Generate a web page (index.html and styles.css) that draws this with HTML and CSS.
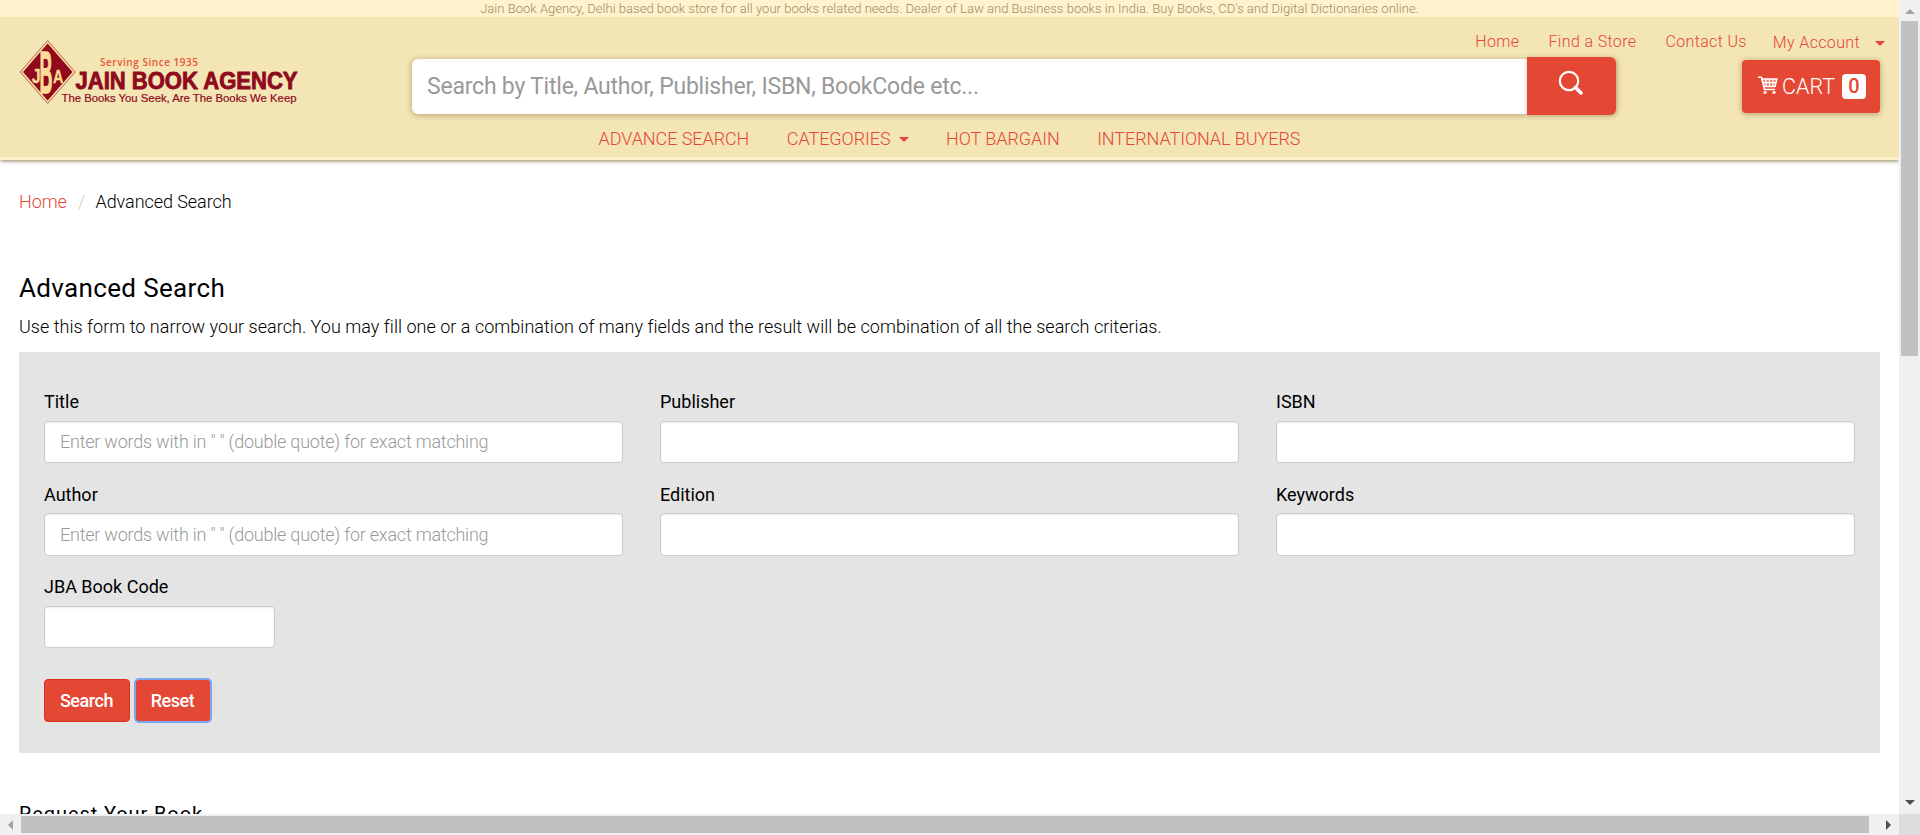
FILE: index.html
```html
<!DOCTYPE html>
<html lang="en">
<head>
<meta charset="utf-8">
<title>Advanced Search - Jain Book Agency</title>
<link rel="stylesheet" href="styles.css">
</head>
<body>
<div class="window">
  <div class="page">
    <div class="topbar">Jain Book Agency, Delhi based book store for all your books related needs. Dealer of Law and Business books in India. Buy Books, CD's and Digital Dictionaries online.</div>
    <header class="header">
      <a class="logo">
        <svg width="290" height="68" viewBox="18 38 290 68">
          <path d="M47.700 40.500 75.200 72 47.700 103.500 20.200 72Z" fill="#fcdc96" stroke="#b5606b" stroke-width="1"/>
          <path d="M47.700 43.500 72.500 72 47.700 100.500 23 72Z" fill="#8f0a1c"/>
          <g class="logo-mono">
            <text transform="translate(31.800 82.500) scale(.8 1)" font-size="20">J</text>
            <text transform="translate(53 82.500) scale(.8 1)" font-size="18">A</text>
            <text class="logo-b" transform="translate(39.600 92.500) scale(.3 1)" font-size="60">B</text>
          </g>
          <text class="logo-since" x="100" y="66" textLength="98">Serving Since 1935</text>
          <text class="logo-name" x="75.500" y="88.500" textLength="222" lengthAdjust="spacingAndGlyphs">JAIN BOOK AGENCY</text>
          <text class="logo-tag" x="61.500" y="102" textLength="235" lengthAdjust="spacingAndGlyphs">The Books You Seek, Are The Books We Keep</text>
        </svg>
      </a>
      <nav class="toplinks">
        <a>Home</a><a>Find a Store</a><a>Contact Us</a><a class="account"><span>My Account</span><i class="caret"></i></a>
      </nav>
      <div class="search">
        <div class="search-input">Search by Title, Author, Publisher, ISBN, BookCode etc...</div>
        <button class="search-btn" aria-label="Search"><svg width="26" height="26" viewBox="0 0 26 26" fill="none" stroke="#fff"><circle cx="11" cy="11" r="9.200" stroke-width="2.200"/><path d="M17.500 17.500 23 23" stroke-width="3.600" stroke-linecap="round"/></svg></button>
      </div>
      <div class="cart-cell">
        <a class="cart">
          <svg width="20" height="18" viewBox="0 0 20 18" fill="none" stroke="#fff"><path d="M0 1.200H3.600L6.500 13.500H17" stroke-width="1.600"/><path d="M4 3H19L17 10.500H6Z" fill="#fff" fill-opacity=".3" stroke-width="1.500"/><path d="M8 3V10M11.500 3V10M15 3V10M5 6.600H18" stroke-width="1.200"/><path d="M5.500 16.500H8.500M14.500 16.500H17.500" stroke-width="2.400"/></svg>
          <span>CART</span><b class="badge">0</b>
        </a>
      </div>
      <nav class="mainnav">
        <a>ADVANCE SEARCH</a><a class="cat"><span>CATEGORIES</span><i class="caret"></i></a><a>HOT BARGAIN</a><a>INTERNATIONAL BUYERS</a>
      </nav>
    </header>
    <main class="content">
      <div class="crumbs"><a>Home</a><span class="sep">/</span><span>Advanced Search</span></div>
      <h1 class="title">Advanced Search</h1>
      <p class="intro">Use this form to narrow your search. You may fill one or a combination of many fields and the result will be combination of all the search criterias.</p>
      <form class="panel">
        <div class="fields">
          <label class="field"><span>Title</span><span class="input">Enter words with in " " (double quote) for exact matching</span></label>
          <label class="field"><span>Publisher</span><span class="input"></span></label>
          <label class="field"><span>ISBN</span><span class="input"></span></label>
          <label class="field"><span>Author</span><span class="input tall">Enter words with in " " (double quote) for exact matching</span></label>
          <label class="field"><span>Edition</span><span class="input tall"></span></label>
          <label class="field"><span>Keywords</span><span class="input tall"></span></label>
          <label class="field"><span>JBA Book Code</span><span class="input short"></span></label>
        </div>
        <div class="actions"><button type="button" class="btn">Search</button><button type="button" class="btn focused">Reset</button></div>
      </form>
      <h2 class="subtitle">Request Your Book</h2>
    </main>
  </div>
  <div class="vbar"><i class="arrow up"></i><i class="vthumb"></i><i class="arrow down"></i></div>
  <div class="hbar"><i class="arrow left"></i><i class="hthumb"></i><i class="arrow right"></i></div>
  <div class="corner"></div>
</div>
</body>
</html>
```
FILE: styles.css
```css
* { box-sizing: border-box; }
body { margin: 0; font-family: Roboto, "Liberation Sans", sans-serif; font-weight: 300; font-size: 18px; line-height: 26px; color: #000; }
.window { display: grid; grid-template-columns: 1899px 21px; grid-template-rows: 814px 21px; width: 1920px; height: 835px; overflow: hidden; }
.page { overflow: hidden; background: #fff; }
.topbar { position: relative; z-index: 1; height: 17px; background: #fff2cc; color: #9d8d67; font-size: 13px; letter-spacing: .03px; line-height: 17px; text-align: center; white-space: nowrap; }
.header { display: grid; grid-template-columns: 393px 1204px 264px; grid-template-rows: 40px 58px 42px; height: 143px; padding: 0 19px; background: #f4e5b5; border-bottom: 3px solid #fff2cc; box-shadow: 0 1px 4px rgba(80, 60, 0, .65); color: #e44734; }
.logo { grid-row: 1 / 3; padding-top: 21px; margin-left: -1px; }
.logo svg { display: block; overflow: visible; }
.logo-mono { font-family: "Liberation Sans", sans-serif; font-weight: 700; fill: #fcdc96; stroke: #fcdc96; stroke-width: .3px; }
.logo-b { stroke-width: 1.500px; }
.logo-since { font: 600 10px "Open Sans", sans-serif; fill: #e8563c; }
.logo-name { font: 700 24px "Liberation Sans", sans-serif; fill: #8f0a1c; stroke: #8f0a1c; stroke-width: .9px; }
.logo-tag { font: 400 11px "Liberation Sans", sans-serif; fill: #8f0a1c; stroke: #8f0a1c; stroke-width: .2px; }
.toplinks { grid-column: 2 / 4; display: flex; justify-content: flex-end; align-items: flex-start; gap: 29px; padding-top: 12px; margin-right: -5px; font-size: 16px; letter-spacing: .36px; }
.account { display: flex; align-items: center; gap: 15px; padding-top: 1px; margin-left: -3px; }
.caret { display: inline-block; border: 5px solid transparent; border-top-color: #e44734; border-bottom: 0; }
.search { grid-column: 2; display: flex; align-items: stretch; height: 58px; }
.search-input { flex: 1; margin: 2px 0 1px; background: #fff; border-radius: 6px 0 0 6px; padding-left: 15px; font-size: 23px; letter-spacing: -.22px; font-weight: 400; line-height: 56px; color: #999; box-shadow: 0 1px 6px rgba(80, 60, 0, .4); }
.search-btn { display: flex; align-items: flex-start; width: 89px; padding: 13px 0 0 31px; border: 0; background: #e44734; border-radius: 0 6px 6px 0; box-shadow: 1px 1px 5px rgba(80, 60, 0, .4); }
.cart-cell { display: flex; justify-content: flex-end; padding-top: 3px; }
.cart { display: flex; align-items: center; width: 138px; height: 53px; padding: 0 14px 0 16px; border-radius: 4px; background: #e44734; color: #fff; font-size: 21.500px; box-shadow: 0 1px 6px rgba(80, 60, 0, .4); }
.cart span { margin: 0 auto 0 4px; }
.cart svg { margin-top: -3px; }
.badge { width: 24px; height: 25px; border-radius: 4px; background: #fff; color: #e44734; font-size: 20px; font-weight: 500; line-height: 25px; text-align: center; }
.mainnav { grid-row: 3; grid-column: 1 / 4; display: flex; justify-content: center; align-items: flex-start; gap: 37.500px; padding-top: 11px; letter-spacing: -.07px; }
.cat { display: flex; align-items: center; gap: 8px; }
.content { padding: 0 19px; }
.crumbs { padding-top: 29px; display: flex; letter-spacing: -.06px; }
.crumbs a { color: #e44734; }
.sep { margin: 0 10.500px 0 11px; color: #ccc; }
.title { margin: 58px 0 0; font-size: 26px; line-height: 30px; font-weight: 400; letter-spacing: .35px; }
.intro { margin: 11px 0 12px; letter-spacing: .025px; }
.panel { width: 1861px; height: 401px; padding: 37px 25px 0; background: #e4e4e4; }
.fields { display: grid; grid-template-columns: repeat(3, 579px); column-gap: 37px; grid-template-rows: 93px 92px 94px; }
.field { display: flex; flex-direction: column; font-weight: 400; }
.input { display: block; height: 42px; margin-top: 6px; padding-left: 15px; border: 1px solid #ccc; border-radius: 4px; background: #fff; box-shadow: inset 0 1px 2px rgba(0, 0, 0, .08); color: #999; font-weight: 300; letter-spacing: -.22px; line-height: 40px; }
.tall { height: 43px; margin-top: 5px; line-height: 41px; }
.short { width: 231px; }
.actions { display: flex; gap: 5px; margin-top: 11px; }
.btn { height: 43px; width: 86px; padding: 0 1px 0 0; border: 1px solid #d8301c; border-radius: 4px; background: #e44734; color: #fff; font: 500 18px/40px Roboto, sans-serif; letter-spacing: -.45px; }
.focused { width: 76px; border-color: #b65a70; outline: 2px solid #7aa7f0; outline-offset: -1px; }
.subtitle { margin: 48px 0 0; font-size: 20px; line-height: 26px; font-weight: 400; letter-spacing: .9px; }
.vbar, .hbar { display: flex; align-items: center; background: #f0f0f0; }
.vbar { flex-direction: column; }
.vthumb { width: 17px; height: 335px; margin-top: 7px; background: #c1c1c1; }
.hthumb { height: 17px; width: 1848px; margin-left: 8px; background: #c1c1c1; }
.arrow { border: 5px solid transparent; }
.up { margin-top: 9px; border-top: 0; border-bottom-color: #a3a3a3; }
.down { margin-top: auto; margin-bottom: 9px; border-bottom: 0; border-top-color: #505050; }
.left { margin-left: 8px; border-left: 0; border-right-color: #a3a3a3; }
.right { margin-left: auto; margin-right: 8px; border-right: 0; border-left-color: #505050; }
.corner { background: #dcdcdc; }
```
